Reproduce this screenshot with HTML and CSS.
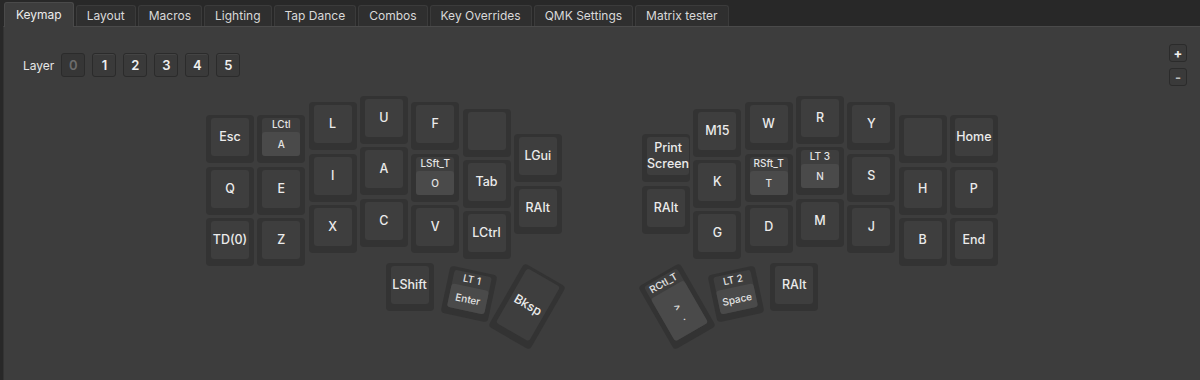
FILE: index.html
```html
<!DOCTYPE html>
<html lang="en">
  <head>
    <meta charset="UTF-8">
    <meta name="viewport" content="width=device-width, initial-scale=1.0">
    <title>Vial - Keymap</title>
    <link rel="stylesheet" href="styles.css">
  </head>
  <body>
    <nav class="tabs">
      <div class="tab active">Keymap</div>
      <div class="tab">Layout</div>
      <div class="tab">Macros</div>
      <div class="tab">Lighting</div>
      <div class="tab">Tap Dance</div>
      <div class="tab">Combos</div>
      <div class="tab">Key Overrides</div>
      <div class="tab">QMK Settings</div>
      <div class="tab">Matrix tester</div>
    </nav>

    <main class="panel">
      <div class="toolbar">
        <div class="layers">
          <span class="layers-label">Layer</span>
          <button class="layer-btn selected">0</button>
          <button class="layer-btn">1</button>
          <button class="layer-btn">2</button>
          <button class="layer-btn">3</button>
          <button class="layer-btn">4</button>
          <button class="layer-btn">5</button>
        </div>
        <div class="zoom">
          <button class="zoom-btn">+</button>
          <button class="zoom-btn minus">-</button>
        </div>
      </div>

      <!-- key positions are in key units, like a KLE layout -->
      <div class="keyboard">
        <!-- left half -->
        <div class="key" style="--x:0;--y:.375"><div class="face">Esc</div></div>
        <div class="key" style="--x:0;--y:1.375"><div class="face">Q</div></div>
        <div class="key" style="--x:0;--y:2.375"><div class="face">TD(0)</div></div>

        <div class="key" style="--x:1;--y:.375"><div class="face mod"><span class="mod-label">LCtl</span><span class="mask">A</span></div></div>
        <div class="key" style="--x:1;--y:1.375"><div class="face">E</div></div>
        <div class="key" style="--x:1;--y:2.375"><div class="face">Z</div></div>

        <div class="key" style="--x:2;--y:.125"><div class="face">L</div></div>
        <div class="key" style="--x:2;--y:1.125"><div class="face">I</div></div>
        <div class="key" style="--x:2;--y:2.125"><div class="face">X</div></div>

        <div class="key" style="--x:3;--y:0"><div class="face">U</div></div>
        <div class="key" style="--x:3;--y:1"><div class="face">A</div></div>
        <div class="key" style="--x:3;--y:2"><div class="face">C</div></div>

        <div class="key" style="--x:4;--y:.125"><div class="face">F</div></div>
        <div class="key" style="--x:4;--y:1.125"><div class="face mod"><span class="mod-label">LSft_T</span><span class="mask">O</span></div></div>
        <div class="key" style="--x:4;--y:2.125"><div class="face">V</div></div>

        <div class="key" style="--x:5;--y:.25"><div class="face"></div></div>
        <div class="key" style="--x:5;--y:1.25"><div class="face">Tab</div></div>
        <div class="key" style="--x:5;--y:2.25"><div class="face">LCtrl</div></div>

        <div class="key" style="--x:6;--y:.75"><div class="face">LGui</div></div>
        <div class="key" style="--x:6;--y:1.75"><div class="face">RAlt</div></div>

        <div class="key" style="--x:3.5;--y:3.25"><div class="face">LShift</div></div>
        <div class="key" style="--x:4.651;--y:3.392;--r:12deg"><div class="face mod"><span class="mod-label">LT 1</span><span class="mask">Enter</span></div></div>
        <div class="key tall" style="--x:5.79;--y:3.4;--r:30deg"><div class="face">Bksp</div></div>

        <!-- right half -->
        <div class="key" style="--x:8.5;--y:.75"><div class="face">Print<br>Screen</div></div>
        <div class="key" style="--x:8.5;--y:1.75"><div class="face">RAlt</div></div>

        <div class="key" style="--x:9.5;--y:.25"><div class="face">M15</div></div>
        <div class="key" style="--x:9.5;--y:1.25"><div class="face">K</div></div>
        <div class="key" style="--x:9.5;--y:2.25"><div class="face">G</div></div>

        <div class="key" style="--x:10.5;--y:.125"><div class="face">W</div></div>
        <div class="key" style="--x:10.5;--y:1.125"><div class="face mod"><span class="mod-label">RSft_T</span><span class="mask">T</span></div></div>
        <div class="key" style="--x:10.5;--y:2.125"><div class="face">D</div></div>

        <div class="key" style="--x:11.5;--y:0"><div class="face">R</div></div>
        <div class="key" style="--x:11.5;--y:1"><div class="face mod"><span class="mod-label">LT 3</span><span class="mask">N</span></div></div>
        <div class="key" style="--x:11.5;--y:2"><div class="face">M</div></div>

        <div class="key" style="--x:12.5;--y:.125"><div class="face">Y</div></div>
        <div class="key" style="--x:12.5;--y:1.125"><div class="face">S</div></div>
        <div class="key" style="--x:12.5;--y:2.125"><div class="face">J</div></div>

        <div class="key" style="--x:13.5;--y:.375"><div class="face"></div></div>
        <div class="key" style="--x:13.5;--y:1.375"><div class="face">H</div></div>
        <div class="key" style="--x:13.5;--y:2.375"><div class="face">B</div></div>

        <div class="key" style="--x:14.5;--y:.375"><div class="face">Home</div></div>
        <div class="key" style="--x:14.5;--y:1.375"><div class="face">P</div></div>
        <div class="key" style="--x:14.5;--y:2.375"><div class="face">End</div></div>

        <div class="key tall" style="--x:8.723;--y:3.4;--r:-30deg"><div class="face mod"><span class="mod-label">RCtl_T</span><span class="mask">&gt;<br>.</span></div></div>
        <div class="key" style="--x:9.871;--y:3.392;--r:-12deg"><div class="face mod"><span class="mod-label">LT 2</span><span class="mask">Space</span></div></div>
        <div class="key" style="--x:11;--y:3.25"><div class="face">RAlt</div></div>
      </div>
    </main>
  </body>
</html>
```

FILE: styles.css
```css
* {
  box-sizing: border-box;
}

html,
body {
  height: 100%;
}

body {
  margin: 0;
  display: flex;
  flex-direction: column;
  font-family: Inter, "Noto Sans", "DejaVu Sans", sans-serif;
  font-size: 12px;
  color: #e6e6e6;
  background-color: #282828;
  overflow: hidden;
}

/* tab bar */

.tabs {
  display: flex;
  align-items: flex-end;
  gap: 2px;
  height: 26px;
  padding-left: 4px;
}

.tab {
  height: 21px;
  padding: 0 10px;
  line-height: 20px;
  color: #d9d9d9;
  background-color: #2f2f2f;
  border: 1px solid #3b3b3b;
  border-bottom: none;
  border-radius: 3px 3px 0 0;
}

.tab.active {
  position: relative;
  z-index: 1;
  height: 25px;
  margin-bottom: -1px;
  padding: 0 11px;
  line-height: 23px;
  color: #ececec;
  background-color: #3d3d3d;
  border-color: #4a4a4a;
}

/* main panel */

.panel {
  flex: 1;
  margin-left: 3px;
  background-color: #3d3d3d;
  border-top: 1px solid #4a4a4a;
  border-left: 1px solid #333;
}

.toolbar {
  display: flex;
  justify-content: space-between;
  align-items: flex-start;
  padding: 17px 13px 0 19px;
}

.layers {
  display: flex;
  align-items: center;
  gap: 7px;
  margin-top: 9px;
}

.layers-label {
  color: #e6e6e6;
}

button {
  font-family: inherit;
  padding: 0;
  cursor: pointer;
}

.layer-btn {
  width: 24px;
  height: 24px;
  font-size: 13px;
  font-weight: 600;
  color: #f0f0f0;
  background-color: #3a3a3a;
  border: 1px solid #2b2b2b;
  border-radius: 3px;
  box-shadow: inset 0 1px 0 #444;
}

.layer-btn.selected {
  color: #6c6c6c;
  background-color: #363636;
  box-shadow: none;
}

.zoom {
  display: flex;
  flex-direction: column;
  gap: 6px;
}

.zoom-btn {
  width: 18px;
  height: 18px;
  font-size: 13px;
  font-weight: 700;
  line-height: 15px;
  color: #f2f2f2;
  background-color: #3a3a3a;
  border: 1px solid #2b2b2b;
  border-radius: 3px;
}

.zoom-btn.minus {
  color: #bdbdbd;
}

/* keyboard canvas */

.keyboard {
  position: relative;
  width: 792px;
  height: 262px;
  margin: 10px auto 0;
}

.key {
  position: absolute;
  left: calc(var(--x) * 51.3px);
  top: calc(var(--y) * 51.3px);
  width: 48px;
  height: 48px;
  display: flex;
  padding: 3px 5px 7px 5px;
  background-color: #333;
  border-radius: 4px;
  transform: rotate(var(--r, 0deg));
}

.key.tall {
  height: 73px;
}

.face {
  flex: 1;
  display: flex;
  align-items: center;
  justify-content: center;
  text-align: center;
  font-size: 12.5px;
  font-weight: 500;
  line-height: 16px;
  color: #ebebeb;
  background-color: #3e3e3e;
  border-radius: 3px;
}

.face.mod {
  flex-direction: column;
  align-items: stretch;
}

.mod-label {
  height: 14px;
  font-size: 10px;
  line-height: 13px;
  color: #e4e4e4;
  white-space: nowrap;
}

.mask {
  flex: 1;
  display: flex;
  align-items: center;
  justify-content: center;
  font-size: 10px;
  line-height: 12px;
  color: #e4e4e4;
  background-color: #4a4a4a;
  border-radius: 3px;
}
```
